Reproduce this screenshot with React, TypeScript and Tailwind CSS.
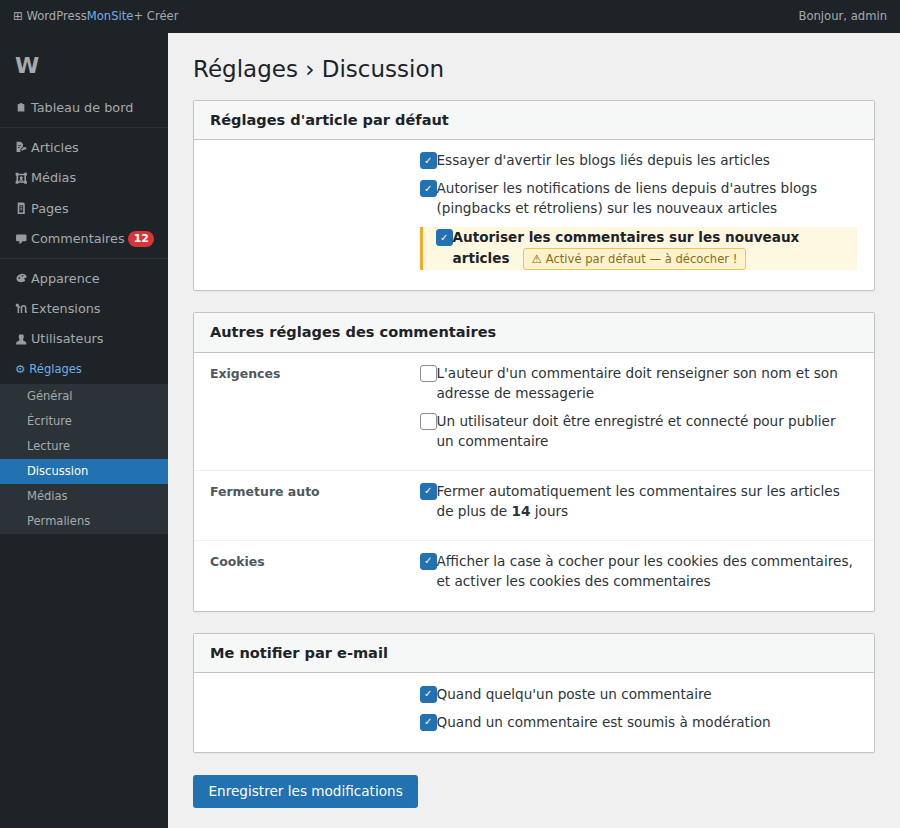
import type { ReactNode } from 'react'

// small monochrome menu glyphs, drawn on a 12x12 box
const icons: Record<string, ReactNode> = {
  home: <path d="M5.8 1.8 L6.8 2.4 L9 3.4 V10 H2.6 V3.4 L4.8 2.4 Z" />,
  note: (
    <>
      <path fillRule="evenodd" d="M1.5 .8 H5.6 L7.6 2.8 V5.6 L5.2 8 V10.6 H1.5 Z M3 4 H6 V4.8 H3 Z M3 6 H5 V6.8 H3 Z" />
      <path d="M6 8.2 L8.4 6 H10.8 V8.2 H8.6 L7.6 9.2 H6 Z" />
    </>
  ),
  image: (
    <>
      <path
        fillRule="evenodd"
        d="M.6 .8 H3 L3.6 1.6 H8.4 L9 .8 H11.4 V3.2 L10.6 3.8 V8.2 L11.4 8.8 V11.2 H9 L8.4 10.4 H3.6 L3 11.2 H.6 V8.8 L1.4 8.2 V3.8 L.6 3.2 Z M3 3.2 V8.8 H9 V3.2 Z"
      />
      <circle cx="6" cy="5.6" r="1.5" />
      <path d="M3.6 8.4 L6 6.6 L8.4 8.4 Z" />
    </>
  ),
  page: (
    <path
      fillRule="evenodd"
      d="M3 .4 H8 L9.4 1.8 V11.6 H2.6 V.8 Z M4.2 3 V10 H7.8 V3 Z M5 4 H7 V4.8 H5 Z M5 5.6 H7 V6.4 H5 Z M5 7.2 H7 V8 H5 Z"
    />
  ),
  comment: <path d="M2.2 1.4 H9.8 Q11 1.4 11 2.6 V6.8 Q11 8 9.8 8 H7.2 L5.2 10.4 H4.2 V8 H2.2 Q1 8 1 6.8 V2.6 Q1 1.4 2.2 1.4 Z" />,
  palette: (
    <path
      fillRule="evenodd"
      d="M6.4 1.8 Q9.6 1.6 10.8 3.4 Q11.4 4.6 10.8 5.4 L8.8 6 Q8.4 6.6 9.6 7.4 Q10.4 8.4 8.8 9.2 Q5.6 10.4 3 9.2 Q1 8 1.4 5.8 Q2 3 6.4 1.8 Z M3.4 5 H5 V6.4 H3.4 Z M6.4 3.2 H8 V4.4 H6.4 Z"
    />
  ),
  plug: (
    <>
      <circle cx="2.2" cy="3" r="1.5" />
      <path
        d="M3.2 3 V10.6 M3.2 5 H5 M6.2 10.6 V5.6 Q6.2 3.6 8.2 3.6 Q10.2 3.6 10.2 5.6 V9.6 H11.6"
        fill="none"
        stroke="currentColor"
        strokeWidth="1.5"
      />
    </>
  ),
  user: <path d="M4 1.4 H8 L8.4 3 V4.6 L7.6 6.6 L8 7.2 L10.8 8.8 V11 H1.2 V8.8 L4 7.2 L4.4 6.6 L3.6 4.6 V3 Z" />,
}

const menuTop = [{ icon: 'home', label: 'Tableau de bord' }]
const menuContent = [
  { icon: 'note', label: 'Articles' },
  { icon: 'image', label: 'Médias' },
  { icon: 'page', label: 'Pages' },
  { icon: 'comment', label: 'Commentaires', badge: '12' },
]
const menuAdmin = [
  { icon: 'palette', label: 'Apparence' },
  { icon: 'plug', label: 'Extensions' },
  { icon: 'user', label: 'Utilisateurs' },
]
const subMenu = ['Général', 'Écriture', 'Lecture', 'Discussion', 'Médias', 'Permaliens']

function MenuItem({ icon, label, badge }: { icon: string; label: string; badge?: string }) {
  return (
    <div className="flex h-[30.4px] items-center pl-[15px] text-[12.8px] text-[#a7aaad]">
      <span className="w-[16px] shrink-0">
        <svg viewBox="0 0 12 12" className="h-[12.5px] w-[12.5px] opacity-90" fill="currentColor">
          {icons[icon]}
        </svg>
      </span>
      <span>{label}</span>
      {badge && (
        <span className="ml-[3.5px] rounded-full bg-[#d63638] px-[5.5px] text-[11px] font-bold leading-[16px] text-white">
          {badge}
        </span>
      )}
    </div>
  )
}

function Check({ checked = true }: { checked?: boolean }) {
  return checked ? (
    <span className="mt-[2px] flex h-[17px] w-[16.5px] shrink-0 items-center justify-center rounded-[3px] border border-[#2271b1] bg-[#2271b1] text-[10px] leading-none text-white">
      ✓
    </span>
  ) : (
    <span className="mt-[2px] h-[17px] w-[16.5px] shrink-0 rounded-[3px] border border-[#8c8f94] bg-white" />
  )
}

function Option({ checked, children }: { checked?: boolean; children: ReactNode }) {
  return (
    <div className="flex text-[13.6px] leading-[20px] text-[#2c3338]">
      <Check checked={checked} />
      <div>{children}</div>
    </div>
  )
}

function Card({ title, className, children }: { title: string; className?: string; children: ReactNode }) {
  return (
    <section
      className={`rounded-[2px] border border-[#c3c4c7] bg-white shadow-[0_1px_1px_rgba(0,0,0,0.04)] ${className ?? 'mb-[21px]'}`}
    >
      <h2 className="flex h-[39.6px] items-center border-b border-[#c3c4c7] bg-[#f6f7f7] px-[16px] pb-[0.5px] text-[14.56px] font-bold text-[#1d2327]">
        {title}
      </h2>
      {children}
    </section>
  )
}

function Row({ label, className, children }: { label?: string; className?: string; children: ReactNode }) {
  return (
    <div className={`flex pl-[16px] pr-[17px] ${className ?? ''}`}>
      <div className="w-[210px] shrink-0 pt-[1px] text-[12.48px] font-bold leading-[20px] text-[#50575e]">{label}</div>
      <div className="flex min-w-0 flex-1 flex-col gap-2">{children}</div>
    </div>
  )
}

export default function App() {
  return (
    <div className="flex h-[828px] w-[900px] flex-col overflow-hidden bg-[#f0f0f1] font-['DejaVu_Sans',sans-serif]">
      <header className="flex h-[33px] shrink-0 items-center justify-between bg-[#1d2327] px-[13px] text-[11.6px] text-[#a7aaad]">
        <div className="flex items-center">
          <span>⊞&nbsp;WordPress</span>
          <span className="text-[#72aee6]">MonSite</span>
          <span>+ Créer</span>
        </div>
        <span>Bonjour, admin</span>
      </header>

      <div className="flex min-h-0 flex-1">
        <aside className="w-[168px] shrink-0 bg-[#1d2327]">
          <div className="px-[15px] pb-[12px] pt-[19px] text-[22px] font-bold leading-[28px] text-[#a7aaad]">W</div>
          {menuTop.map(item => (
            <MenuItem key={item.label} {...item} />
          ))}
          <div className="my-[4.5px] border-t border-[#2c3338]" />
          {menuContent.map(item => (
            <MenuItem key={item.label} {...item} />
          ))}
          <div className="my-[4px] border-t border-[#2c3338]" />
          {menuAdmin.map(item => (
            <MenuItem key={item.label} {...item} />
          ))}
          <div className="flex h-[30px] items-center gap-[4px] px-[15px] pt-[1px] text-[11.52px] text-[#72aee6]">
            <span>⚙</span>
            <span>Réglages</span>
          </div>
          <div className="bg-[#2c3338]">
            {subMenu.map(item => (
              <div
                key={item}
                className={`flex h-[25px] items-center px-[27px] pt-[1px] text-[11.52px] ${
                  item === 'Discussion' ? 'bg-[#2271b1] text-white' : 'text-[#a7aaad]'
                }`}
              >
                {item}
              </div>
            ))}
          </div>
        </aside>

        <main className="min-w-0 flex-1 px-[25px] pt-[20px]">
          <h1 className="mb-[13.6px] text-[23px] leading-[33px] text-[#1d2327]">Réglages › Discussion</h1>

          <Card title="Réglages d'article par défaut">
            <Row className="pb-[20px] pt-[10px]">
              <Option>Essayer d'avertir les blogs liés depuis les articles</Option>
              <Option>
                Autoriser les notifications de liens depuis d'autres blogs (pingbacks et rétroliens) sur les nouveaux
                articles
              </Option>
              <div className="mt-[1px] border-l-[3px] border-[#f9a825] bg-[#fff8e1] pl-[13px]">
                <div className="flex text-[13.6px] leading-[20px] text-[#1d2327]">
                  <Check />
                  <div className="font-bold leading-[21px]">
                    Autoriser les commentaires sur les nouveaux articles
                    <span className="ml-[13px] inline-block rounded-[3px] border border-[#f9c05a] bg-[#fff3cd] px-2 text-[11.6px] font-normal leading-[20px] text-[#8a6d1a]">
                      ⚠ Activé par défaut — à décocher !
                    </span>
                  </div>
                </div>
              </div>
            </Row>
          </Card>

          <Card title="Autres réglages des commentaires">
            <Row label="Exigences" className="border-b border-[#f0f0f1] pb-[19px] pt-[10px]">
              <Option checked={false}>
                L'auteur d'un commentaire doit renseigner son nom et son adresse de messagerie
              </Option>
              <Option checked={false}>Un utilisateur doit être enregistré et connecté pour publier un commentaire</Option>
            </Row>
            <Row label="Fermeture auto" className="border-b border-[#f0f0f1] pb-[19px] pt-[10px]">
              <Option>
                Fermer automatiquement les commentaires sur les articles de plus de <b>14</b> jours
              </Option>
            </Row>
            <Row label="Cookies" className="pb-[20px] pt-[10px]">
              <Option>Afficher la case à cocher pour les cookies des commentaires, et activer les cookies des commentaires</Option>
            </Row>
          </Card>

          <Card title="Me notifier par e-mail" className="mb-[22px]">
            <Row className="pb-[20.5px] pt-[10.5px]">
              <Option>Quand quelqu'un poste un commentaire</Option>
              <Option>Quand un commentaire est soumis à modération</Option>
            </Row>
          </Card>

          <button className="h-[32.5px] rounded-[3px] bg-[#2271b1] px-[15.5px] text-[13.6px] text-white">
            Enregistrer les modifications
          </button>
        </main>
      </div>
    </div>
  )
}
